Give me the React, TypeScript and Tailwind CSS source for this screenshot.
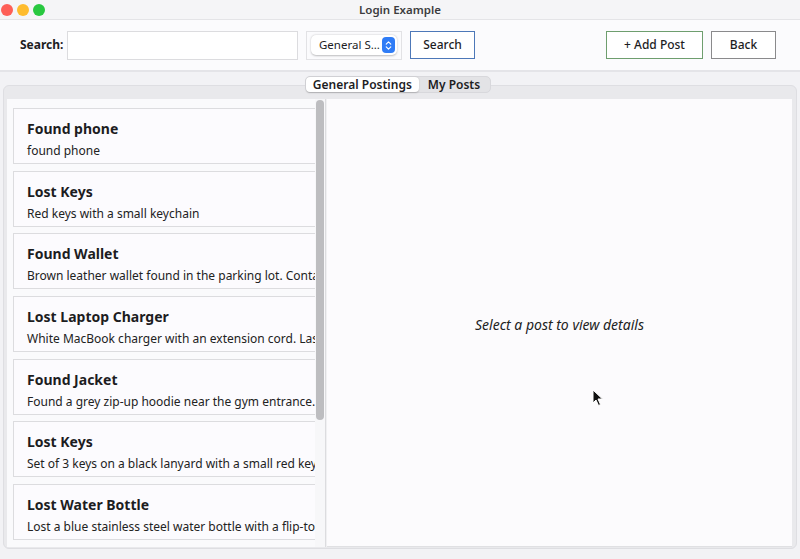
import { ChevronsUpDown } from 'lucide-react';

const posts = [
    { title: 'Found phone', body: 'found phone' },
    { title: 'Lost Keys', body: 'Red keys with a small keychain' },
    { title: 'Found Wallet', body: 'Brown leather wallet found in the parking lot. Contains ID and some cash.' },
    { title: 'Lost Laptop Charger', body: 'White MacBook charger with an extension cord. Last seen in the library.' },
    { title: 'Found Jacket', body: 'Found a grey zip-up hoodie near the gym entrance.' },
    { title: 'Lost Keys', body: 'Set of 3 keys on a black lanyard with a small red keychain.' },
    { title: 'Lost Water Bottle', body: 'Lost a blue stainless steel water bottle with a flip-top lid.' },
];

function Cursor() {
    return (
        <svg width="12" height="18" viewBox="0 0 12 18" className="absolute left-[265px] top-[290px]">
            <path d="M1 1 L1 14 L4 11 L6.5 16.5 L8.5 15.5 L6 10 L10.5 10 Z" fill="#111" stroke="#fff" strokeWidth="1" />
        </svg>
    );
}

export default function App() {
    return (
        <div className="w-[800px] h-[559px] flex flex-col bg-[#f2f2f5] overflow-hidden text-[#1d1d1f]" style={{ fontFamily: '"Noto Sans", "DejaVu Sans", sans-serif' }}>
            {/* title bar */}
            <div className="h-[20px] shrink-0 flex items-center bg-[#f5f5f7] border-b border-[#e4e4e7]">
                <div className="w-[60px] flex items-center gap-[4px] pl-[1px]">
                    <span className="w-[12px] h-[12px] rounded-full bg-[#fe5f57]" />
                    <span className="w-[12px] h-[12px] rounded-full bg-[#febc2e]" />
                    <span className="w-[12px] h-[12px] rounded-full bg-[#28c840]" />
                </div>
                <div className="flex-1 text-center text-[11.5px] font-semibold text-[#3c3c3e]">Login Example</div>
                <div className="w-[60px]" />
            </div>

            {/* toolbar */}
            <div className="h-[52px] shrink-0 flex items-center pl-[20px] pr-[24px] bg-[#fbfbfd] border-b-2 border-[#e4e4e8]">
                <span className="w-[47px] text-[12px] font-bold">Search:</span>
                <input className="w-[231px] h-[29px] border border-[#dcdcdf] bg-white outline-none" />
                <div className="ml-[8px] w-[96px] h-[29px] border border-[#e2e2e5] flex items-center justify-center">
                    <div className="w-[86px] h-[20px] bg-white rounded-[5px] shadow-[0_0.5px_2px_rgba(0,0,0,0.25)] flex items-center justify-between pl-[8px] pr-[2px]">
                        <span className="text-[11.5px] whitespace-nowrap">General S...</span>
                        <span className="w-[13px] h-[16px] rounded-[4px] bg-[#2f7cf6] flex items-center justify-center">
                            <ChevronsUpDown size={11} color="#fff" strokeWidth={2.5} />
                        </span>
                    </div>
                </div>
                <button className="ml-[8px] w-[65px] h-[28px] border border-[#4d78b8] bg-white text-[12px] font-medium">Search</button>
                <div className="flex-1" />
                <button className="w-[97px] h-[28px] border border-[#6e9e6e] bg-white text-[12px] font-medium">+ Add Post</button>
                <button className="ml-[8px] w-[65px] h-[28px] border border-[#8a8a8c] bg-white text-[12px] font-medium">Back</button>
            </div>

            {/* tabs */}
            <div className="flex-1 flex flex-col px-[3px] pt-[4px] pb-[10px] min-h-0">
                <div className="relative z-10 flex justify-center -mb-[8px]">
                    <div className="flex items-center h-[17px] rounded-[5px] bg-[#e3e3e6] border border-[#d8d8dc] pr-[1px] mr-[4px]">
                        <div className="h-[15px] px-[7px] flex items-center rounded-[4px] bg-white shadow-[0_0.5px_1.5px_rgba(0,0,0,0.2)] text-[12px] font-semibold">General Postings</div>
                        <div className="h-[15px] px-[9px] flex items-center text-[12px] font-semibold">My Posts</div>
                    </div>
                </div>
                <div className="flex-1 min-h-0 flex flex-col rounded-[6px] border border-[#dedee2] bg-[#e9e9ec] pt-[13px] pl-[3px] pr-[4px] pb-[1px]">
                    <div className="flex-1 min-h-0 flex">
                        {/* list */}
                        <div className="w-[308px] overflow-hidden bg-[#fafafc] pl-[6px] pt-[9px] flex flex-col gap-[6.7px]">
                            {posts.map((p, i) => (
                                <div key={i} className="w-[330px] h-[56px] shrink-0 border border-[#dcdcdf] bg-[#fcfbfe] pl-[13px] pt-[10px] whitespace-nowrap">
                                    <div className="text-[14px] font-bold leading-[20px]">{p.title}</div>
                                    <div className="text-[12px] leading-[16px] mt-[4px] text-[#222]">{p.body}</div>
                                </div>
                            ))}
                        </div>
                        {/* scrollbar */}
                        <div className="w-[11px] bg-[#f7f7f9] border-r border-[#dcdcdf] pl-[1px] pt-[1px]">
                            <div className="w-[8px] h-[320px] rounded-full bg-[#bdbdc0]" />
                        </div>
                        <div className="w-[1px] bg-[#f0f0f2]" />
                        {/* detail */}
                        <div className="relative flex-1 bg-[#fcfbfd] border-b border-[#e0e0e3] flex items-center justify-center">
                            <span className="italic text-[14px] text-[#222] mt-[3px]">Select a post to view details</span>
                            <Cursor />
                        </div>
                    </div>
                </div>
            </div>
        </div>
    );
}
